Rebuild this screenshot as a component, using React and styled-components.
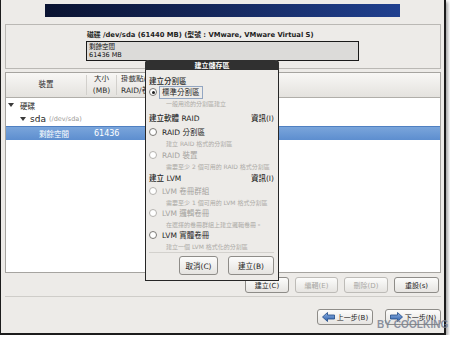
import React from "react";
import styled, { createGlobalStyle } from "styled-components";

const GlobalStyle = createGlobalStyle`
  html, body {
    margin: 0;
    padding: 0;
    background: #ffffff;
  }
  body {
    font-family: "DejaVu Sans", "Noto Sans CJK TC", sans-serif;
    color: #1e1e1e;
  }
  * {
    box-sizing: border-box;
  }
`;

const Window = styled.div`
  position: relative;
  width: 446px;
  height: 335px;
  background: #edebe8;
  border-left: 1px solid #1c1c1c;
  border-right: 2px solid #1c1c1c;
  border-bottom: 2px solid #1c1c1c;
  box-shadow: 2px 2px 3px rgba(0, 0, 0, 0.35);
  padding: 4px 3px 0 4px;
  display: flex;
  flex-direction: column;
`;

const Banner = styled.div`
  margin-left: 40px;
  width: 355px;
  height: 13px;
  background: linear-gradient(90deg, #0a1331 0%, #142659 45%, #20408f 100%);
`;

const DiskPanel = styled.div`
  margin-top: 7px;
  height: 45px;
  border: 1px solid #bab8b4;
  padding: 5px 0 0 80px;
`;

const DiskTitle = styled.div`
  font-size: 6.8px;
  font-weight: bold;
  line-height: 11px;
  padding-left: 1px;
  white-space: nowrap;
`;

const DiskBar = styled.div`
  width: 273px;
  height: 20px;
  border: 1px solid #1a1a1a;
  background: #dcdbd9;
  padding: 1px 0 0 2px;
  font-size: 6.5px;
  line-height: 8px;
  color: #111;
`;

const Table = styled.div`
  margin-top: 3px;
  height: 201px;
  border: 1px solid #a6a4a0;
  background: #ffffff;
  display: flex;
  flex-direction: column;
`;

const HeaderRow = styled.div`
  display: grid;
  grid-template-columns: 81px 30px 1fr;
  height: 25px;
  background: linear-gradient(#f8f7f5, #e4e2de);
  border-bottom: 1px solid #b0aea9;
`;

const HeadCell = styled.div`
  display: flex;
  flex-direction: column;
  justify-content: center;
  align-items: ${(p) => (p.$left ? "flex-start" : "center")};
  padding-left: ${(p) => (p.$left ? "4px" : "0")};
  font-size: 7.5px;
  line-height: 12px;
  color: #2e2e2e;
  white-space: nowrap;
  overflow: hidden;
  border-right: ${(p) => (p.$divider ? "1px solid #d2d0cc" : "none")};
  margin: 2px 0;
`;

const BodyRow = styled.div`
  display: grid;
  grid-template-columns: 81px 30px 1fr;
  height: 14px;
  align-items: center;
  font-size: 7.5px;
  color: ${(p) => (p.$selected ? "#ffffff" : "#1e1e1e")};
  background: ${(p) =>
    p.$selected ? "linear-gradient(#7aa5db, #5d8ecf)" : "transparent"};
  border-top: ${(p) => (p.$selected ? "1px solid #4f80c2" : "none")};
`;

const TreeCell = styled.div`
  display: flex;
  align-items: center;
  padding-left: ${(p) => p.$indent}px;
  white-space: nowrap;
`;

const Expander = styled.span`
  width: 0;
  height: 0;
  border-left: 3px solid transparent;
  border-right: 3px solid transparent;
  border-top: 4px solid #3a3a3a;
  margin-right: 6px;
`;

const DevName = styled.span`
  font-size: 9px;
  margin-left: -2px;
`;

const Muted = styled.span`
  font-size: 6.5px;
  color: #9c9a96;
  margin-left: 3px;
`;

const SizeCell = styled.div`
  padding-left: 7px;
  font-size: 8px;
`;

const ButtonRow = styled.div`
  margin-top: 4px;
  display: flex;
  justify-content: flex-end;
  gap: 6px;
  padding-right: 2px;
`;

const Button = styled.div`
  width: ${(p) => p.$w}px;
  height: 16px;
  display: flex;
  align-items: center;
  justify-content: center;
  gap: 2px;
  font-size: 7px;
  color: ${(p) => (p.$disabled ? "#a9a7a3" : "#1e1e1e")};
  background: linear-gradient(#fcfcfb, #e6e4e1);
  border: 1px solid ${(p) => (p.$disabled ? "#bdbbb7" : "#8e8c88")};
  border-radius: 3px;
  white-space: nowrap;
`;

const Separator = styled.div`
  margin-top: 3px;
  height: 1px;
  background: #cfcdc9;
`;

const NavRow = styled.div`
  margin-top: 12px;
  display: flex;
  justify-content: flex-end;
  gap: 12px;
`;

const Watermark = styled.div`
  position: absolute;
  left: 376px;
  top: 319px;
  font-family: "Liberation Sans", sans-serif;
  font-weight: bold;
  font-size: 10px;
  line-height: 12px;
  white-space: nowrap;
  color: rgba(120, 128, 145, 0.85);
  letter-spacing: 0.1px;
  pointer-events: none;
`;

const Dialog = styled.div`
  position: absolute;
  left: 144px;
  top: 60px;
  width: 134px;
  height: 221px;
  border: 1px solid #262626;
  border-top: none;
  border-radius: 4px 4px 0 0;
  background: #edebe8;
  display: flex;
  flex-direction: column;
`;

const DialogTitle = styled.div`
  height: 10px;
  margin: 0 -1px;
  background: #303030;
  border-radius: 4px 4px 0 0;
  color: #ffffff;
  font-size: 7px;
  font-weight: bold;
  display: flex;
  align-items: center;
  justify-content: center;
  overflow: hidden;
`;

const DialogBody = styled.div`
  flex: 1;
  padding: 4px 4px 5px 3px;
  display: flex;
  flex-direction: column;
`;

const SectionHead = styled.div`
  height: 12px;
  margin-top: ${(p) => p.$mt || 0}px;
  display: flex;
  align-items: center;
  justify-content: space-between;
  font-size: 7.5px;
  font-weight: 500;
`;

const RadioRow = styled.div`
  height: 12px;
  margin-top: ${(p) => p.$mt || 0}px;
  display: flex;
  align-items: center;
  font-size: 7.5px;
  color: ${(p) => (p.$disabled ? "#a5a39f" : "#1e1e1e")};
`;

const Radio = styled.span`
  width: 8px;
  height: 8px;
  border-radius: 50%;
  border: 1px solid ${(p) => (p.$disabled ? "#b4b2ae" : "#7c7a76")};
  background: #ffffff;
  margin-right: 4px;
  display: flex;
  align-items: center;
  justify-content: center;
  &::after {
    content: "";
    width: 3px;
    height: 3px;
    border-radius: 50%;
    background: ${(p) => (p.$checked ? "#1e1e1e" : "transparent")};
  }
`;

const RadioLabel = styled.span`
  padding: 1px 2px;
  margin-left: -2px;
  border: 1px solid ${(p) => (p.$focus ? "#93a6c2" : "transparent")};
  line-height: 9px;
`;

const Desc = styled.div`
  height: 10px;
  padding-left: 17px;
  display: flex;
  align-items: center;
  font-size: 6px;
  color: #acaaa6;
  white-space: nowrap;
`;

const DialogSep = styled.div`
  margin-top: 1px;
  height: 1px;
  background: #d3d1cd;
`;

const DialogButtons = styled.div`
  margin-top: 3px;
  display: flex;
  justify-content: flex-end;
  gap: 10px;
`;

const DialogButton = styled.div`
  width: ${(p) => p.$w}px;
  height: 19px;
  display: flex;
  align-items: center;
  justify-content: center;
  font-size: 7.5px;
  background: linear-gradient(#fcfcfb, #e5e3e0);
  border: 1px solid #8e8c88;
  border-radius: 3px;
`;

const Arrow = ({ dir }) => (
  <svg width="13" height="10" viewBox="0 0 13 10">
    <defs>
      <linearGradient id={`ar-${dir}`} x1="0" y1="0" x2="0" y2="1">
        <stop offset="0" stopColor="#8fb3e6" />
        <stop offset="1" stopColor="#2d5fa8" />
      </linearGradient>
    </defs>
    <polygon
      points={
        dir === "left"
          ? "0.5,5 5.5,0.5 5.5,3 12.5,3 12.5,7 5.5,7 5.5,9.5"
          : "12.5,5 7.5,0.5 7.5,3 0.5,3 0.5,7 7.5,7 7.5,9.5"
      }
      fill={`url(#ar-${dir})`}
      stroke="#204a87"
      strokeWidth="0.8"
      strokeLinejoin="round"
    />
  </svg>
);

const options = [
  { head: "建立分割區", mt: 0 },
  { radio: "標準分割區", checked: true, focus: true, desc: "一般用途的分割區建立" },
  { head: "建立軟體 RAID", info: true, mt: 3 },
  { radio: "RAID 分割區", desc: "建立 RAID 格式的分割區", mt: 3 },
  { radio: "RAID 裝置", disabled: true, desc: "需要至少 2 個可用的 RAID 格式分割區", mt: 1 },
  { head: "建立 LVM", info: true },
  { radio: "LVM 卷冊群組", disabled: true, desc: "需要至少 1 個可用的 LVM 格式分割區", mt: 2 },
  { radio: "LVM 邏輯卷冊", disabled: true, desc: "在選擇的卷冊群組上建立邏輯卷冊。" },
  { radio: "LVM 實體卷冊", desc: "建立一個 LVM 格式化的分割區" },
];

export default function App() {
  return (
    <>
      <GlobalStyle />
      <Window>
        <Banner />
        <DiskPanel>
          <DiskTitle>磁碟 /dev/sda (61440 MB) (型號 : VMware, VMware Virtual S)</DiskTitle>
          <DiskBar>
            <div>剩餘空間</div>
            <div>61436 MB</div>
          </DiskBar>
        </DiskPanel>

        <Table>
          <HeaderRow>
            <HeadCell $divider>裝置</HeadCell>
            <HeadCell $divider>
              <span>大小</span>
              <span>(MB)</span>
            </HeadCell>
            <HeadCell $left>
              <span>掛載點/</span>
              <span>RAID/卷冊</span>
            </HeadCell>
          </HeaderRow>
          <BodyRow>
            <TreeCell $indent={2}>
              <Expander />
              硬碟
            </TreeCell>
          </BodyRow>
          <BodyRow>
            <TreeCell $indent={14}>
              <Expander />
              <DevName>sda</DevName>
              <Muted>(/dev/sda)</Muted>
            </TreeCell>
          </BodyRow>
          <BodyRow $selected>
            <TreeCell $indent={33}>剩餘空間</TreeCell>
            <SizeCell>61436</SizeCell>
          </BodyRow>
        </Table>

        <ButtonRow>
          <Button $w={44}>建立(C)</Button>
          <Button $w={43} $disabled>編輯(E)</Button>
          <Button $w={44} $disabled>刪除(D)</Button>
          <Button $w={45}>重設(s)</Button>
        </ButtonRow>
        <Separator />
        <NavRow>
          <Button $w={56}>
            <Arrow dir="left" />
            上一步(B)
          </Button>
          <Button $w={56}>
            <Arrow dir="right" />
            下一步(N)
          </Button>
        </NavRow>

        <Watermark>BY COOLKING</Watermark>

        <Dialog>
          <DialogTitle>建立儲存區</DialogTitle>
          <DialogBody>
            {options.map((o, i) =>
              o.head ? (
                <SectionHead key={i} $mt={o.mt}>
                  <span>{o.head}</span>
                  {o.info && <span>資訊(I)</span>}
                </SectionHead>
              ) : (
                <React.Fragment key={i}>
                  <RadioRow $mt={o.mt} $disabled={o.disabled}>
                    <Radio $checked={o.checked} $disabled={o.disabled} />
                    <RadioLabel $focus={o.focus}>{o.radio}</RadioLabel>
                  </RadioRow>
                  <Desc>{o.desc}</Desc>
                </React.Fragment>
              )
            )}
            <DialogSep />
            <DialogButtons>
              <DialogButton $w={39}>取消(C)</DialogButton>
              <DialogButton $w={46}>建立(B)</DialogButton>
            </DialogButtons>
          </DialogBody>
        </Dialog>
      </Window>
    </>
  );
}
